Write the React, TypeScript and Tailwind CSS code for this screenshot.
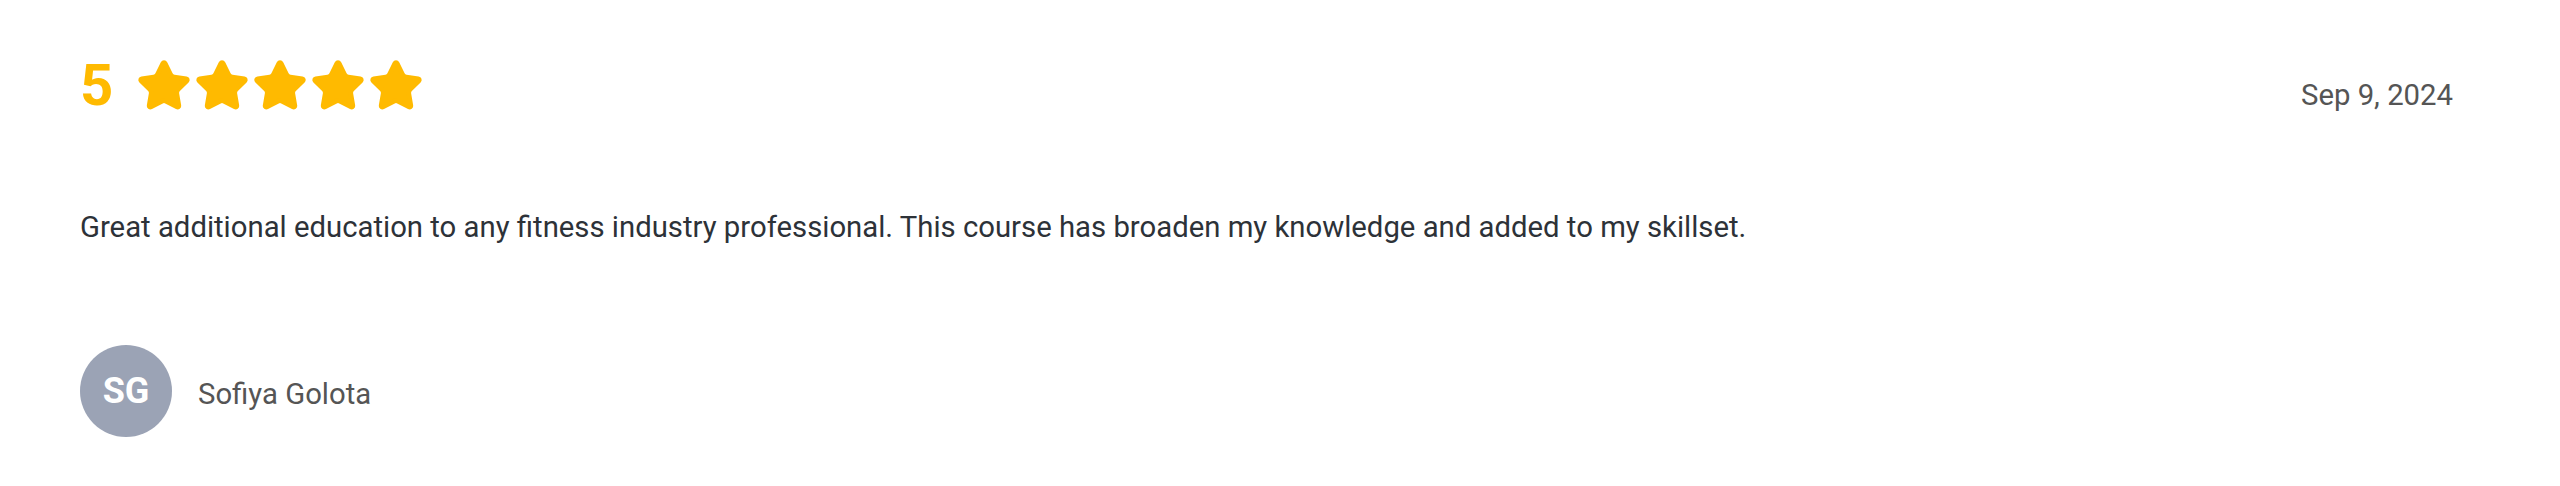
import React from "react";

const Star = () => (
  <svg width="56" height="56" viewBox="0 0 24 24" fill="#FFBA00" stroke="#FFBA00" strokeWidth="2" strokeLinecap="round" strokeLinejoin="round">
    <path d="M11.525 2.295a.53.53 0 0 1 .95 0l2.31 4.679a2.123 2.123 0 0 0 1.595 1.16l5.166.756a.53.53 0 0 1 .294.904l-3.736 3.638a2.123 2.123 0 0 0-.611 1.878l.882 5.14a.53.53 0 0 1-.771.56l-4.618-2.428a2.122 2.122 0 0 0-1.973 0L6.396 21.01a.53.53 0 0 1-.77-.56l.881-5.139a2.122 2.122 0 0 0-.611-1.879L2.16 9.795a.53.53 0 0 1 .294-.906l5.165-.755a2.122 2.122 0 0 0 1.597-1.16z" />
  </svg>
);

export default function App() {
  return (
    <div className="w-[2560px] h-[486px] bg-white pl-[80px] pr-[107px] pt-[56px]" style={{ fontFamily: "Roboto, 'Noto Sans', sans-serif" }}>
      <div className="flex items-baseline justify-between">
        <div className="flex items-center">
          <span className="text-[58px] leading-none font-bold text-[#FFBA00]">5</span>
          <div className="flex items-center gap-[2px] ml-[23px] pt-[2px]">
            <Star />
            <Star />
            <Star />
            <Star />
            <Star />
          </div>
        </div>
        <span className="text-[29.3px] leading-none text-[#555555]">Sep 9, 2024</span>
      </div>
      <p className="mt-[93px] text-[29.3px] leading-[40px] text-[#2d3238]">
        Great additional education to any fitness industry professional. This course has broaden my knowledge and added to my skillset.
      </p>
      <div className="mt-[98px] flex items-center gap-[26px]">
        <div className="w-[92px] h-[92px] rounded-full bg-[#9ba3b5] flex items-center justify-center text-white font-bold text-[36px] leading-none">
          SG
        </div>
        <span className="mt-[8px] text-[29.3px] leading-none text-[#555555]">Sofiya Golota</span>
      </div>
    </div>
  );
}
